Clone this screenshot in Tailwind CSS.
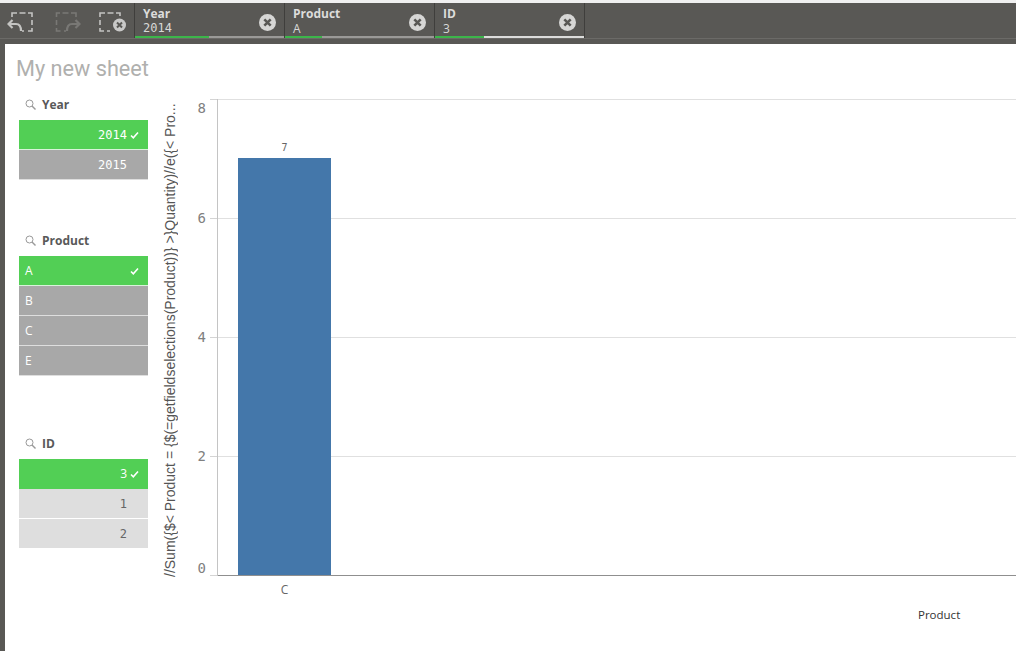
<!DOCTYPE html>
<html lang="en">
<head>
  <meta charset="UTF-8">
  <title>My new sheet</title>
  <script src="https://cdn.jsdelivr.net/npm/@tailwindcss/browser@4"></script>
</head>
<body class="bg-white font-['Open_Sans',sans-serif]">
  <div class="w-[1016px] h-[651px] overflow-hidden flex flex-col bg-[#595855]">
    <!-- toolbar -->
    <div class="h-[3px] bg-[#f0f0f0]"></div>
    <div class="h-[35px] flex border-b border-[#6b6a67] box-content">
      <div class="w-[135px] flex items-start pt-[7px] pl-[7px] border-r border-[#3f3e3c]">
        <svg width="26" height="24" viewBox="0 0 26 24" fill="none" stroke="#c4c4c2" stroke-width="1.6">
          <path d="M5 7V3h5M12.500 3h6M21 3h4v4M25 10v5M25 18v3h-4M17 21h-2" />
          <path d="M1 14h8c3.500 0 5 3 5 7" stroke-width="2.200" /><path d="M5.500 10L1.500 14l4 4" stroke-width="2.200" />
        </svg>
        <svg class="ml-[22px]" width="26" height="24" viewBox="0 0 26 24" fill="none" stroke="#797875" stroke-width="1.6">
          <path d="M21 7V3h-5M13.500 3h-6M5 3H1.500v4M1.500 10v5M1.500 18v3h4M9 21h2" />
          <path d="M25 14h-8c-3.500 0-5 3-5 7" stroke-width="2.200" /><path d="M20.500 10l4 4-4 4" stroke-width="2.200" />
        </svg>
        <svg class="ml-[14px]" width="32" height="24" viewBox="0 0 32 24" fill="none" stroke="#c4c4c2" stroke-width="1.6">
          <path d="M5 7V3h5M12.500 3h6M21 3h4v3M5 10v5M5 18v3h4M12 21h3" />
          <circle cx="24.500" cy="15" r="6.500" fill="#c9c9c8" stroke="none" />
          <path d="M22 12.500l5 5M27 12.500l-5 5" stroke="#595855" stroke-width="2" />
        </svg>
      </div>
      <div class="w-[150px] relative border-r border-[#3f3e3c] pl-[8px] text-[#dcdcdb]">
        <div class="text-[12px] leading-[14px] font-bold pt-[4px] box-content">Year</div>
        <div class="font-['DejaVu_Sans_Mono',monospace] text-[12px] leading-[15px] text-[#d8d8d7]">2014</div>
        <svg class="absolute right-[8px] top-[11px]" width="17" height="17" viewBox="0 0 16 16"><circle cx="8" cy="8" r="8" fill="#d6d6d5" /><path d="M5 5l6 6M11 5l-6 6" stroke="#595855" stroke-width="2.400" /></svg>
        <div class="absolute left-0 right-0 bottom-0 h-[2px] flex bg-[#9a9997]"><div class="w-[74px] bg-[#3cb54a]"></div></div>
      </div>
      <div class="w-[150px] relative border-r border-[#3f3e3c] pl-[8px] text-[#dcdcdb]">
        <div class="text-[12px] leading-[14px] font-bold pt-[4px] box-content">Product</div>
        <div class="text-[12px] leading-[15px] text-[#d8d8d7]">A</div>
        <svg class="absolute right-[8px] top-[11px]" width="17" height="17" viewBox="0 0 16 16"><circle cx="8" cy="8" r="8" fill="#d6d6d5" /><path d="M5 5l6 6M11 5l-6 6" stroke="#595855" stroke-width="2.400" /></svg>
        <div class="absolute left-0 right-0 bottom-0 h-[2px] flex bg-[#9a9997]"><div class="w-[37px] bg-[#3cb54a]"></div></div>
      </div>
      <div class="w-[150px] relative border-r border-[#3f3e3c] pl-[8px] text-[#dcdcdb]">
        <div class="text-[12px] leading-[14px] font-bold pt-[4px] box-content">ID</div>
        <div class="text-[12px] leading-[15px] text-[#d8d8d7]">3</div>
        <svg class="absolute right-[8px] top-[11px]" width="17" height="17" viewBox="0 0 16 16"><circle cx="8" cy="8" r="8" fill="#d6d6d5" /><path d="M5 5l6 6M11 5l-6 6" stroke="#595855" stroke-width="2.400" /></svg>
        <div class="absolute left-0 right-0 bottom-0 h-[2px] flex bg-[#dcdcdb]"><div class="w-[49px] bg-[#3cb54a]"></div></div>
      </div>
    </div>

    <!-- sheet -->
    <div class="mt-[5px] ml-[5px] flex-1 bg-white relative">
      <h1 class="font-['Roboto',sans-serif] text-[21.700px] h-[26px] leading-[26px] text-[#b0b0ae] pl-[11px] pt-[12px] box-content -mb-[1px]">My new sheet</h1>
      <div class="flex mt-[12px]">
        <!-- filter panes -->
        <div class="w-[129px] ml-[14px] shrink-0">
          <div class="h-[136px]">
            <div class="h-[27px] pb-[4px] flex items-center pl-[6px] gap-[6px] text-[12px] font-bold text-[#595959]">
              <svg width="11" height="11" viewBox="0 0 11 11" fill="none" stroke="#999" stroke-width="1"><circle cx="4.500" cy="4.500" r="3.500" /><path d="M7 7l3.500 3.500" stroke-width="1.400" /></svg>Year
            </div>
            <div class="h-[30px] pt-[1px] bg-[#52cf55] border-b border-[#d9f3da] flex items-center justify-end pr-[9px] text-white font-['DejaVu_Sans_Mono',monospace] text-[12px]">2014<svg class="ml-[3px]" width="9" height="8" viewBox="0 0 9 8" fill="none" stroke="#fff" stroke-width="1.600"><path d="M1 4.500l2.300 2.300L8 1.500" /></svg></div>
            <div class="h-[30px] pt-[1px] bg-[#a8a8a8] border-b border-[#dedede] flex items-center justify-end pr-[21px] text-white font-['DejaVu_Sans_Mono',monospace] text-[12px]">2015</div>
          </div>
          <div class="h-[203px]">
            <div class="h-[27px] pb-[4px] flex items-center pl-[6px] gap-[6px] text-[12px] font-bold text-[#595959]">
              <svg width="11" height="11" viewBox="0 0 11 11" fill="none" stroke="#999" stroke-width="1"><circle cx="4.500" cy="4.500" r="3.500" /><path d="M7 7l3.500 3.500" stroke-width="1.400" /></svg>Product
            </div>
            <div class="h-[30px] bg-[#52cf55] border-b border-[#d9f3da] flex items-center justify-between pl-[6px] pr-[9px] text-white text-[12px]">A<svg width="9" height="8" viewBox="0 0 9 8" fill="none" stroke="#fff" stroke-width="1.600"><path d="M1 4.500l2.300 2.300L8 1.500" /></svg></div>
            <div class="h-[30px] bg-[#a8a8a8] border-b border-[#dedede] flex items-center pl-[6px] text-white text-[12px]">B</div>
            <div class="h-[30px] bg-[#a8a8a8] border-b border-[#dedede] flex items-center pl-[6px] text-white text-[12px]">C</div>
            <div class="h-[30px] bg-[#a8a8a8] border-b border-[#dedede] flex items-center pl-[6px] text-white text-[12px]">E</div>
          </div>
          <div>
            <div class="h-[27px] pb-[4px] flex items-center pl-[6px] gap-[6px] text-[12px] font-bold text-[#595959]">
              <svg width="11" height="11" viewBox="0 0 11 11" fill="none" stroke="#999" stroke-width="1"><circle cx="4.500" cy="4.500" r="3.500" /><path d="M7 7l3.500 3.500" stroke-width="1.400" /></svg>ID
            </div>
            <div class="h-[30px] bg-[#52cf55] flex items-center justify-end pr-[9px] text-white text-[12px]">3<svg class="ml-[3px]" width="9" height="8" viewBox="0 0 9 8" fill="none" stroke="#fff" stroke-width="1.600"><path d="M1 4.500l2.300 2.300L8 1.500" /></svg></div>
            <div class="h-[30px] pt-[1px] bg-[#dedede] border-b border-white flex items-center justify-end pr-[21px] text-[#666] text-[12px] font-['DejaVu_Sans_Mono',monospace]">1</div>
            <div class="h-[29px] pt-[1px] bg-[#dedede] flex items-center justify-end pr-[21px] text-[#666] text-[12px] font-['DejaVu_Sans_Mono',monospace]">2</div>
          </div>
        </div>

        <!-- y axis title -->
        <div class="w-[36px] ml-[4px] mt-[6px] h-[478px] flex justify-center shrink-0">
          <div class="[writing-mode:vertical-rl] rotate-180 whitespace-nowrap font-['Liberation_Sans',sans-serif] text-[14px] leading-[16px] text-[#555] h-[478px] text-left">//Sum({$&lt; Product = {$(=getfieldselections(Product))} &gt;}Quantity)//e({&lt; Pro...</div>
        </div>

        <!-- chart -->
        <div class="flex-1 min-w-0 mt-[6px]">
          <div class="h-[477px] flex">
            <div class="w-[29px] flex flex-col justify-between items-end shrink-0">
              <div class="flex items-center h-px"><span class="translate-y-[9px] font-['DejaVu_Sans_Mono',monospace] text-[14px] text-[#808080]">8</span><span class="w-[7px] h-px ml-[4px] bg-[#d4d4d4]"></span></div>
              <div class="flex items-center h-px"><span class="font-['DejaVu_Sans_Mono',monospace] text-[14px] text-[#808080]">6</span><span class="w-[7px] h-px ml-[4px] bg-[#d4d4d4]"></span></div>
              <div class="flex items-center h-px"><span class="font-['DejaVu_Sans_Mono',monospace] text-[14px] text-[#808080]">4</span><span class="w-[7px] h-px ml-[4px] bg-[#d4d4d4]"></span></div>
              <div class="flex items-center h-px"><span class="font-['DejaVu_Sans_Mono',monospace] text-[14px] text-[#808080]">2</span><span class="w-[7px] h-px ml-[4px] bg-[#d4d4d4]"></span></div>
              <div class="flex items-center h-px"><span class="-translate-y-[7px] font-['DejaVu_Sans_Mono',monospace] text-[14px] text-[#808080]">0</span><span class="w-[7px] h-px ml-[4px] bg-[#d4d4d4]"></span></div>
            </div>
            <div class="flex-1 relative border-l border-l-[#c4c4c4]">
              <div class="h-full flex flex-col justify-between">
                <div class="h-px bg-[#e0e0e0]"></div>
                <div class="h-px bg-[#e0e0e0]"></div>
                <div class="h-px bg-[#e0e0e0]"></div>
                <div class="h-px bg-[#e0e0e0]"></div>
                <div class="h-px bg-[#8f8f8f]"></div>
              </div>
              <div class="absolute left-[20px] bottom-[1px] w-[93px] h-[417px] bg-[#4477aa]">
                <div class="absolute -top-[17px] inset-x-0 text-center text-[10px] leading-[14px] text-[#666] font-['DejaVu_Sans_Mono',monospace]">7</div>
              </div>
            </div>
          </div>
          <div class="ml-[50px] w-[93px] text-[12px] leading-[14px] text-[#666] text-center pt-[7px] box-content">C</div>
          <div class="text-[11.500px] leading-[14px] text-[#333] pt-[11px] box-content pl-[730px]">Product</div>
        </div>
      </div>
    </div>
  </div>
</body>
</html>
